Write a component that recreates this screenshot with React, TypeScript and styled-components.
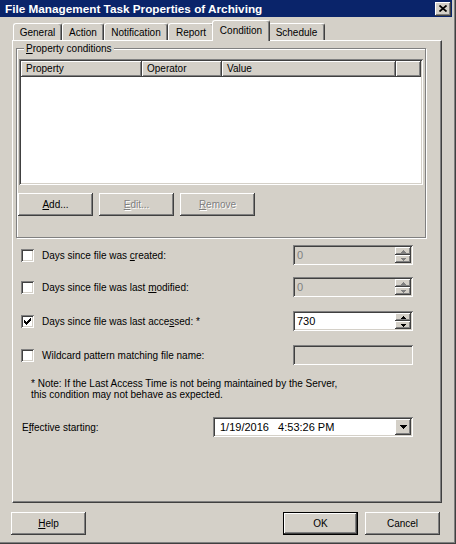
import React from 'react'
import styled, { createGlobalStyle, css } from 'styled-components'

const face = '#d4d0c8'
const shadow = '#808080'
const dark = '#404040'

const GlobalStyle = createGlobalStyle`
  html, body {
    margin: 0;
    padding: 0;
    background: ${face};
  }
  body {
    font-family: "Liberation Sans", Arial, sans-serif;
    font-size: 10px;
    color: #000;
  }
`

const raised = css`
  box-shadow: inset -1px -1px ${dark}, inset 1px 1px #fff, inset -2px -2px ${shadow}, inset 2px 2px ${face};
`
const sunken = css`
  box-shadow: inset 1px 1px ${shadow}, inset -1px -1px #fff, inset 2px 2px ${dark}, inset -2px -2px ${face};
`

const Window = styled.div`
  width: 456px;
  height: 544px;
  box-sizing: border-box;
  background: ${face};
  box-shadow: inset -1px -1px ${dark}, inset -2px -2px ${shadow};
  display: flex;
  flex-direction: column;
`
const TitleBar = styled.div`
  width: 452px;
  height: 17px;
  box-sizing: border-box;
  background: #0a246a;
  display: flex;
  align-items: center;
  justify-content: space-between;
  padding: 0 1px 0 5px;
`
const Title = styled.span`
  color: #fff;
  font-weight: bold;
  font-size: 11.75px;
  line-height: 15px;
  white-space: nowrap;
`
const CloseButton = styled.div`
  width: 16px;
  height: 14px;
  background: ${face};
  ${raised};
  display: flex;
  align-items: center;
  justify-content: center;
`
const Content = styled.div`
  padding: 3px 0 0 12px;
`
const TabRow = styled.div`
  display: flex;
  align-items: flex-end;
  height: 20px;
  padding-left: 1px;
  position: relative;
  z-index: 1;
`
const Tab = styled.div<{ $active?: boolean; $width: number }>`
  position: relative;
  box-sizing: border-box;
  width: ${(p) => p.$width + (p.$active ? 4 : 0)}px;
  height: ${(p) => (p.$active ? 21 : 17)}px;
  margin: 0 ${(p) => (p.$active ? -2 : 0)}px ${(p) => (p.$active ? -1 : 0)}px;
  padding-top: ${(p) => (p.$active ? 3 : 2)}px;
  z-index: ${(p) => (p.$active ? 2 : 1)};
  background: ${face};
  border-top: 1px solid #fff;
  border-left: 1px solid #fff;
  border-right: 1px solid ${dark};
  box-shadow: inset -1px 0 ${shadow};
  border-radius: 3px 3px 0 0;
  line-height: 13px;
  text-align: center;
  white-space: nowrap;
`
const Panel = styled.div`
  position: relative;
  box-sizing: border-box;
  width: 430px;
  height: 463px;
  background: ${face};
  border-top: 1px solid #fff;
  border-left: 1px solid #fff;
  border-right: 1px solid ${dark};
  border-bottom: 1px solid ${dark};
  box-shadow: inset -1px -1px ${shadow};
  padding: 7px 15px 0 3px;
  display: flex;
  flex-direction: column;
`
const GroupBox = styled.div`
  position: relative;
  box-sizing: border-box;
  height: 190px;
  border: 1px solid ${shadow};
  box-shadow: inset 1px 1px #fff, 1px 1px #fff;
  padding: 10px 2px 0 2px;
  display: flex;
  flex-direction: column;
`
const GroupCaption = styled.span`
  position: absolute;
  top: -7px;
  left: 7px;
  padding: 0 2px;
  background: ${face};
  line-height: 13px;
`
const ListView = styled.div`
  box-sizing: border-box;
  height: 126px;
  background: #fff;
  ${sunken};
  padding: 2px;
`
const HeaderRow = styled.div`
  display: flex;
  height: 16px;
`
const HeaderCell = styled.div<{ $width?: number }>`
  box-sizing: border-box;
  ${(p) => (p.$width ? `width: ${p.$width}px;` : 'flex: 1;')}
  height: 16px;
  background: ${face};
  ${raised};
  padding: 0 0 0 5px;
  line-height: 15px;
`
const ButtonRow = styled.div`
  display: flex;
  gap: 6px;
  margin: 8px 0 0 -1px;
`
const Button = styled.div<{ $disabled?: boolean; $default?: boolean }>`
  box-sizing: border-box;
  width: 75px;
  height: 23px;
  background: ${face};
  ${raised};
  display: flex;
  align-items: center;
  justify-content: center;
  color: ${(p) => (p.$disabled ? shadow : '#000')};
  text-shadow: ${(p) => (p.$disabled ? '1px 1px #fff' : 'none')};
  ${(p) =>
    p.$default &&
    css`
      border: 1px solid #000;
      box-shadow: inset -1px -1px ${dark}, inset 1px 1px #fff, inset -2px -2px ${shadow};
    `}
`
const Row = styled.div<{ $gap: number }>`
  display: flex;
  align-items: center;
  height: 20px;
  margin-top: ${(p) => p.$gap}px;
  padding: 0 13px 0 5px;
`
const CheckBox = styled.div`
  box-sizing: border-box;
  width: 13px;
  height: 13px;
  background: #fff;
  ${sunken};
  flex: none;
`
const Label = styled.span<{ $indent?: number }>`
  margin-left: ${(p) => p.$indent ?? 8}px;
  white-space: nowrap;
`
const Field = styled.div<{ $disabled?: boolean; $width: number }>`
  box-sizing: border-box;
  width: ${(p) => p.$width}px;
  height: 20px;
  margin-left: auto;
  background: ${(p) => (p.$disabled ? face : '#fff')};
  ${sunken};
  padding: 2px;
  display: flex;
  align-items: center;
`
const FieldText = styled.span<{ $disabled?: boolean; $pad?: number }>`
  flex: 1;
  padding-left: ${(p) => p.$pad ?? 2}px;
  color: ${(p) => (p.$disabled ? shadow : '#000')};
  font-size: 11px;
  white-space: pre;
`
const SpinStack = styled.div`
  display: flex;
  flex-direction: column;
  width: 16px;
  height: 16px;
`
const SpinButton = styled.div`
  flex: 1;
  background: ${face};
  ${raised};
  display: flex;
  align-items: center;
  justify-content: center;
`
const DropButton = styled.div`
  width: 16px;
  height: 16px;
  background: ${face};
  ${raised};
  display: flex;
  align-items: center;
  justify-content: center;
`
const Note = styled.div`
  margin-top: 13px;
  padding-left: 15px;
  line-height: 11px;
`
const Footer = styled.div`
  display: flex;
  gap: 7px;
  padding: 9px 16px 0 11px;
`
const Spacer = styled.div`
  flex: 1;
`
const U = styled.span`
  text-decoration: underline;
`

const checkPixels: [number, number, number][] = [
  [6, 0, 1],
  [5, 1, 2],
  [0, 2, 1],
  [4, 2, 3],
  [0, 3, 2],
  [3, 3, 3],
  [0, 4, 5],
  [1, 5, 3],
  [2, 6, 1],
]

const Check = () => (
  <svg width="7" height="7" viewBox="0 0 7 7" shapeRendering="crispEdges" style={{ margin: 3 }}>
    {checkPixels.map(([x, y, w]) => (
      <rect key={`${x}-${y}`} x={x} y={y} width={w} height={1} fill="#000" />
    ))}
  </svg>
)

const Arrow = ({ up, disabled, size = 5 }: { up?: boolean; disabled?: boolean; size?: number }) => {
  const h = Math.ceil(size / 2)
  const pts = up ? `0,${h} ${size / 2},0 ${size},${h}` : `0,0 ${size / 2},${h} ${size},0`
  return (
    <svg width={size} height={h} viewBox={`0 0 ${size} ${h}`} shapeRendering="crispEdges">
      <polygon points={pts} fill={disabled ? shadow : '#000'} />
    </svg>
  )
}

const Spinner = ({ value, disabled }: { value: string; disabled?: boolean }) => (
  <Field $width={120} $disabled={disabled}>
    <FieldText $disabled={disabled}>{value}</FieldText>
    <SpinStack>
      <SpinButton>
        <Arrow up disabled={disabled} />
      </SpinButton>
      <SpinButton>
        <Arrow disabled={disabled} />
      </SpinButton>
    </SpinStack>
  </Field>
)

const tabs = [
  { label: 'General', width: 49 },
  { label: 'Action', width: 42 },
  { label: 'Notification', width: 64 },
  { label: 'Report', width: 46 },
  { label: 'Condition', width: 54 },
  { label: 'Schedule', width: 57 },
]

export default function App() {
  return (
    <Window>
      <GlobalStyle />
      <TitleBar>
        <Title>File Management Task Properties of Archiving</Title>
        <CloseButton>
          <svg width="8" height="7" viewBox="0 0 8 7">
            <path d="M0.5 0.5 L7.5 6.5 M7.5 0.5 L0.5 6.5" stroke="#000" strokeWidth="1.7" />
          </svg>
        </CloseButton>
      </TitleBar>
      <Content>
        <TabRow>
          {tabs.map((t) => (
            <Tab key={t.label} $width={t.width} $active={t.label === 'Condition'}>
              {t.label}
            </Tab>
          ))}
        </TabRow>
        <Panel>
          <GroupBox>
            <GroupCaption>
              <U>P</U>roperty conditions
            </GroupCaption>
            <ListView>
              <HeaderRow>
                <HeaderCell $width={121}>Property</HeaderCell>
                <HeaderCell $width={80}>Operator</HeaderCell>
                <HeaderCell $width={174}>Value</HeaderCell>
                <HeaderCell />
              </HeaderRow>
            </ListView>
            <ButtonRow>
              <Button>
                <span>
                  <U>A</U>dd...
                </span>
              </Button>
              <Button $disabled>
                <span>
                  <U>E</U>dit...
                </span>
              </Button>
              <Button $disabled>
                <span>
                  <U>R</U>emove
                </span>
              </Button>
            </ButtonRow>
          </GroupBox>

          <Row $gap={7}>
            <CheckBox />
            <Label>
              Days since file was <U>c</U>reated:
            </Label>
            <Spinner value="0" disabled />
          </Row>
          <Row $gap={12}>
            <CheckBox />
            <Label>
              Days since file was last <U>m</U>odified:
            </Label>
            <Spinner value="0" disabled />
          </Row>
          <Row $gap={14}>
            <CheckBox>
              <Check />
            </CheckBox>
            <Label>
              Days since file was last acce<U>s</U>sed: *
            </Label>
            <Spinner value="730" />
          </Row>
          <Row $gap={14}>
            <CheckBox />
            <Label>Wildcard pattern matching file name:</Label>
            <Field $width={120} $disabled />
          </Row>

          <Note>
            * Note: If the Last Access Time is not being maintained by the Server,
            <br />
            this condition may not behave as expected.
          </Note>

          <Row $gap={17}>
            <Label $indent={1}>
              E<U>f</U>fective starting:
            </Label>
            <Field $width={200}>
              <FieldText $pad={5}>{'1/19/2016   4:53:26 PM'}</FieldText>
              <DropButton>
                <Arrow size={7} />
              </DropButton>
            </Field>
          </Row>
        </Panel>
      </Content>
      <Footer>
        <Button>
          <span>
            <U>H</U>elp
          </span>
        </Button>
        <Spacer />
        <Button $default>OK</Button>
        <Button>Cancel</Button>
      </Footer>
    </Window>
  )
}
